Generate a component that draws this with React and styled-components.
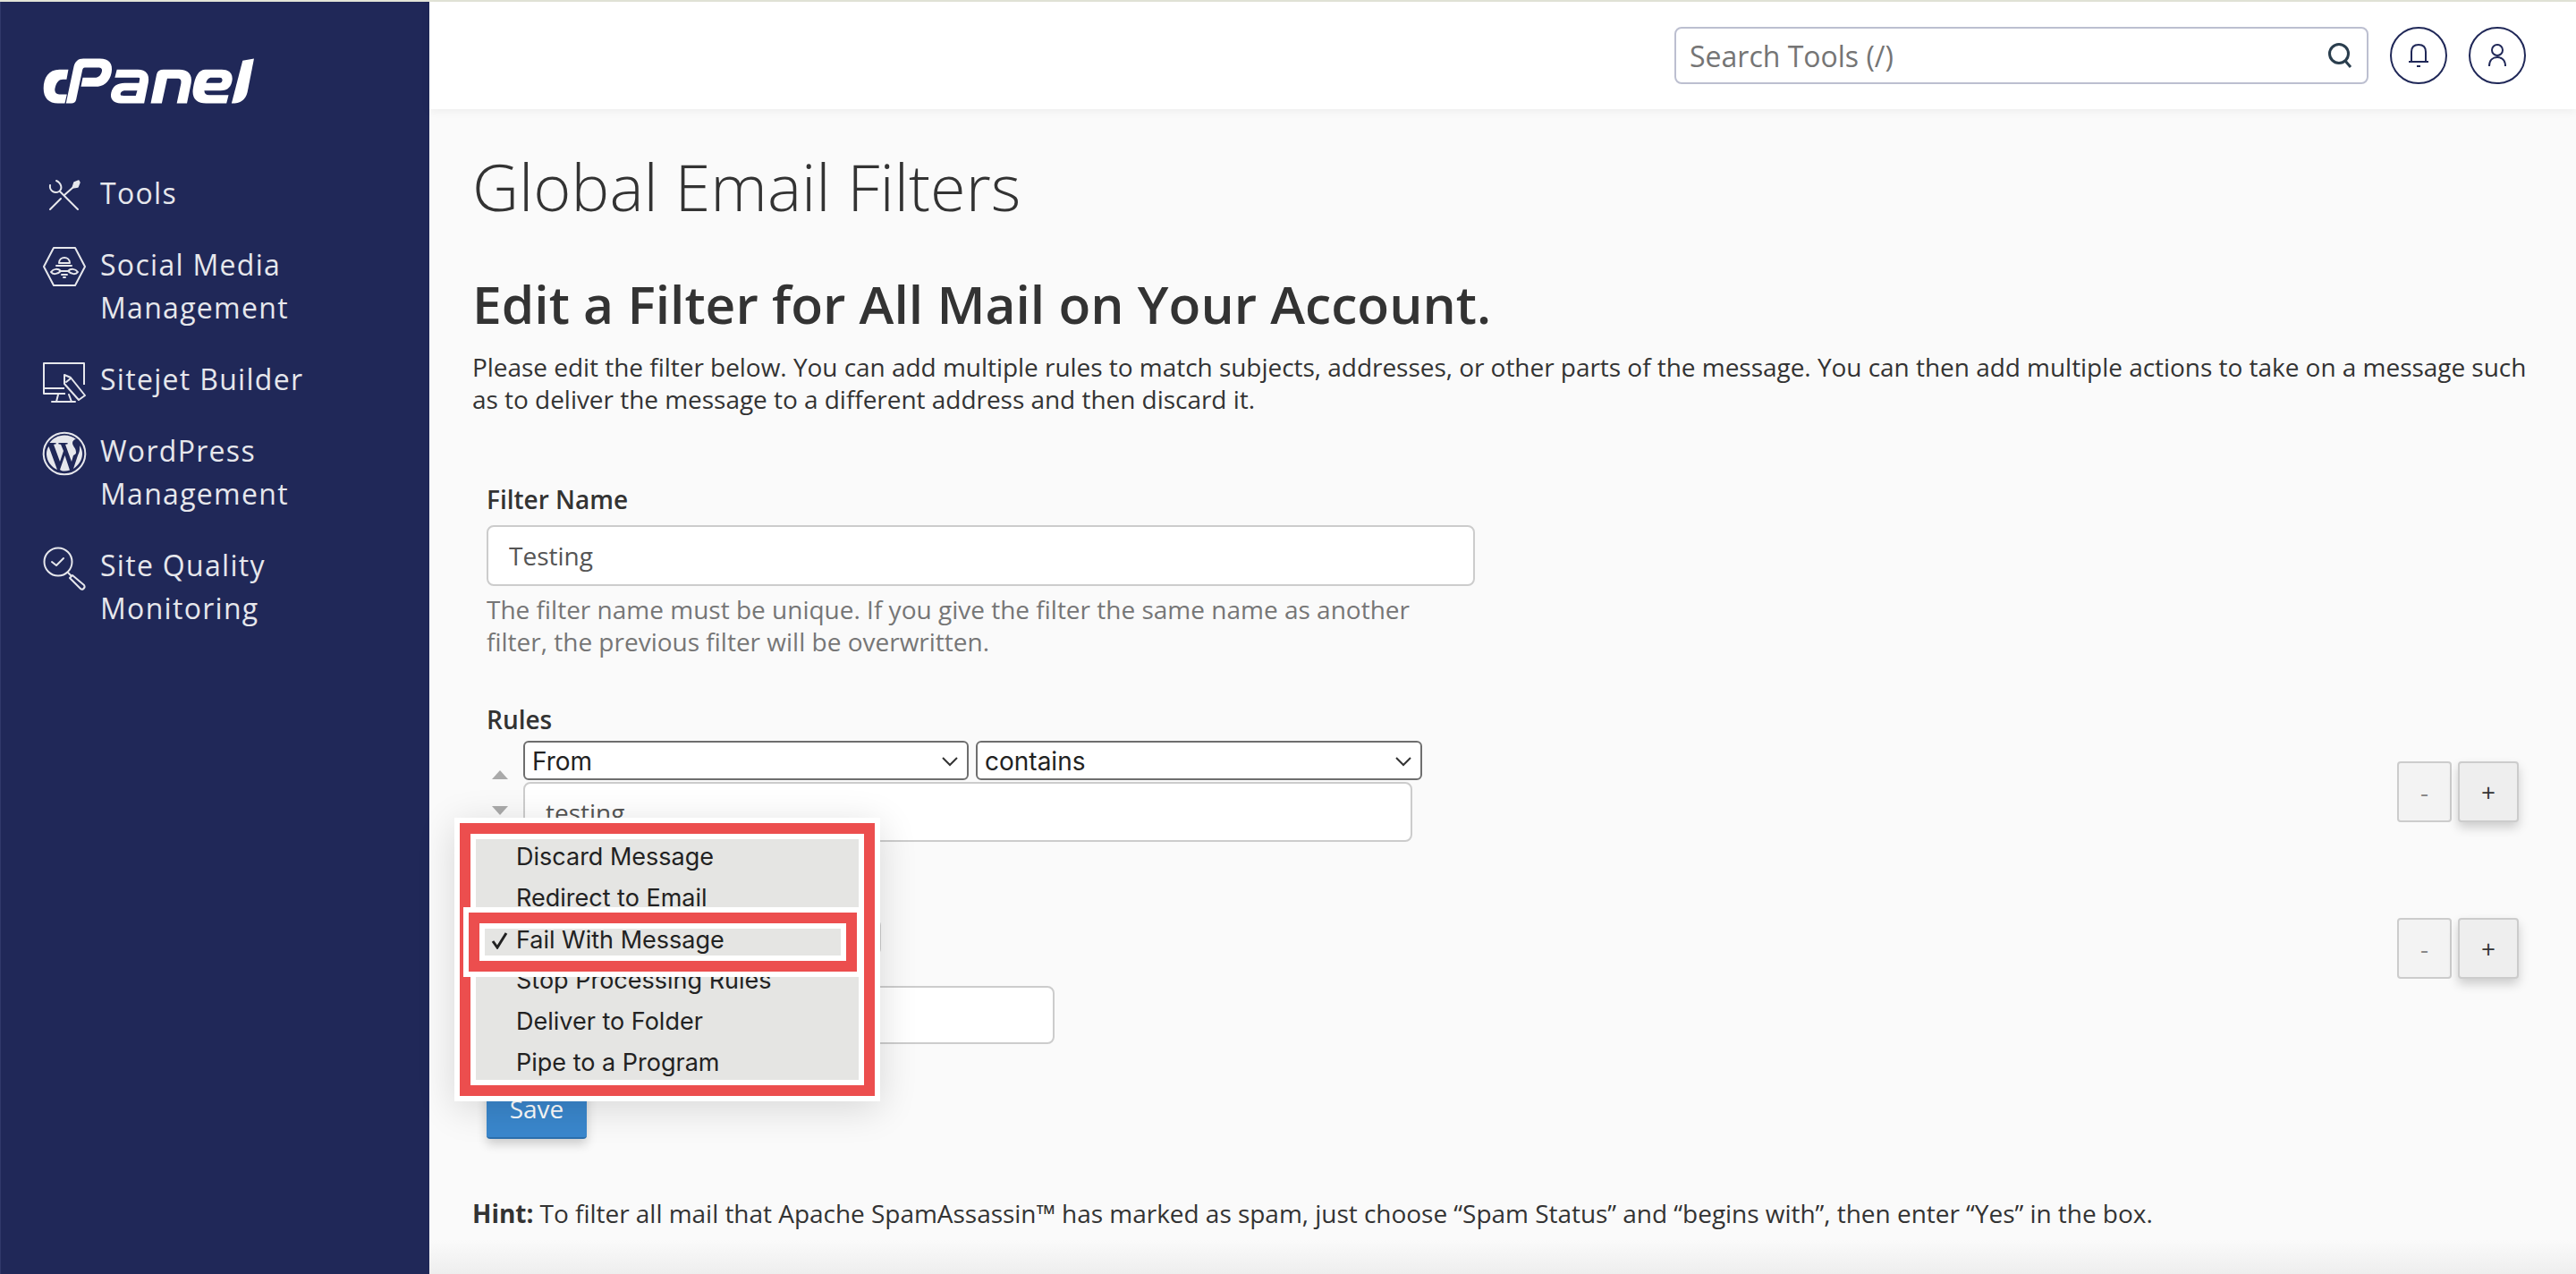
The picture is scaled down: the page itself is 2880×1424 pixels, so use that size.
import React from 'react'
import styled, { createGlobalStyle } from 'styled-components'

const GlobalStyle = createGlobalStyle`
  html, body {
    margin: 0;
    padding: 0;
    height: 100%;
    background: #fafafa;
    font-family: "Open Sans", "Liberation Sans", sans-serif;
    overflow: hidden;
  }
  * { box-sizing: border-box; }
`

const Page = styled.div`
  width: 2880px;
  height: 1424px;
  display: flex;
  flex-direction: column;
  overflow: hidden;
`

const TopStrip = styled.div`
  height: 2px;
  flex: none;
  background: #e3e5d8;
`

const Shell = styled.div`
  flex: 1;
  display: flex;
  min-height: 0;
`

const Sidebar = styled.nav`
  width: 480px;
  flex: none;
  background: #202858;
  border-left: 1px solid #31396a;
  padding: 63px 0 0 47px;
`

const Logo = styled.svg`
  display: block;
  width: 236px;
  height: 51px;
  margin-bottom: 76px;
`

const NavList = styled.div`
  display: flex;
  flex-direction: column;
  gap: 32px;
`

const NavItem = styled.a`
  display: flex;
  gap: 16px;
  color: #e6e7ec;
  font-size: 32px;
  line-height: 48px;
  letter-spacing: 1.3px;
`

const NavLabel = styled.span`
  width: 270px;
`

const NavIcon = styled.svg`
  width: 48px;
  height: 48px;
  flex: none;
  overflow: visible;
  margin-top: ${(p) => p.$shift || 0}px;
  fill: none;
  stroke: #e6e7ec;
  stroke-width: 2;
  stroke-linecap: round;
  stroke-linejoin: round;
`

const Main = styled.main`
  flex: 1;
  min-width: 0;
  position: relative;
  display: flex;
  flex-direction: column;

  &::after {
    content: '';
    position: absolute;
    left: 0;
    right: 0;
    bottom: 0;
    height: 38px;
    background: linear-gradient(to bottom, rgba(238, 238, 238, 0), #eeeeee);
  }
`

const Topbar = styled.header`
  height: 120px;
  flex: none;
  background: #fff;
  box-shadow: 0 2px 10px rgba(0, 0, 0, 0.06);
  display: flex;
  justify-content: flex-end;
  align-items: flex-start;
  gap: 24px;
  padding: 28px 56px 0 0;
`

const SearchBox = styled.label`
  width: 776px;
  height: 64px;
  display: flex;
  align-items: center;
  justify-content: space-between;
  padding: 0 14px 0 15px;
  border: 2px solid #bcbfd0;
  border-radius: 8px;
  background: #fff;
`

const SearchInput = styled.input`
  flex: 1;
  border: 0;
  outline: 0;
  padding: 0;
  background: none;
  font-family: inherit;
  font-size: 32px;
  color: #333;

  &::placeholder {
    color: #757575;
    opacity: 1;
  }
`

const RoundButton = styled.button`
  width: 64px;
  height: 64px;
  padding: 0;
  border: 2px solid #202858;
  border-radius: 50%;
  background: #fff;
  display: flex;
  align-items: center;
  justify-content: center;
`

const Content = styled.div`
  padding: 46px 48px 0;
  color: #333;
  font-size: 28px;
  line-height: 36px;
`

const Title = styled.h1`
  margin: 0;
  font-size: 72px;
  line-height: 80px;
  font-weight: 300;
  color: #333;
`

const Heading = styled.h2`
  margin: 58px 0 0;
  font-size: 58.7px;
  line-height: 66px;
  font-weight: 600;
  color: #333;
`

const Intro = styled.p`
  margin: 20px 0 0;
  letter-spacing: -0.035px;
`

const Form = styled.form`
  margin-top: 76px;
  padding-left: 16px;
`

const FieldLabel = styled.div`
  font-weight: 600;
  margin-top: ${(p) => p.$top || 0}px;
  margin-bottom: ${(p) => p.$gap || 6}px;
`

const TextInput = styled.input`
  display: block;
  width: ${(p) => p.$width}px;
  height: ${(p) => p.$height}px;
  padding: 0 23px;
  border: 2px solid #ccc;
  border-radius: 8px;
  background: #fff;
  outline: 0;
  font-family: inherit;
  font-size: 28px;
  color: #555;
`

const HelpText = styled.p`
  width: 1105px;
  margin: 8px 0 51px;
  color: #767676;
`

const RuleRow = styled.div`
  position: relative;
  display: flex;
  align-items: ${(p) => p.$align || 'center'};
  justify-content: space-between;
  padding-right: 16px;
`

const RuleBody = styled.div`
  display: flex;
  align-items: center;
`

const SortArrows = styled.div`
  width: 41px;
  flex: none;
  display: flex;
  flex-direction: column;
  gap: 30px;
  padding: 33px 0 0 6px;
  align-self: flex-start;
`

const Arrow = styled.span`
  display: block;
  width: 0;
  height: 0;
  border-left: 9px solid transparent;
  border-right: 9px solid transparent;
  ${(p) => (p.$down ? 'border-top: 10px solid #aaa;' : 'border-bottom: 10px solid #aaa;')}
`

const RuleFields = styled.div`
  display: flex;
  flex-direction: column;
  gap: ${(p) => p.$gap || 2}px;
  padding-top: ${(p) => p.$top || 0}px;
`

const SelectRow = styled.div`
  display: flex;
  gap: 8px;
`

const SelectBox = styled.div`
  width: ${(p) => p.$width}px;
  height: ${(p) => p.$height || 44}px;
  display: flex;
  align-items: center;
  justify-content: space-between;
  padding: 2px 10px 0 8px;
  border: 2px solid ${(p) => p.$border || '#6e6e6e'};
  border-radius: 6px;
  background: #fff;
  font-family: Inter, "Liberation Sans", sans-serif;
  font-size: 28px;
  color: #222;
`

const Chevron = styled.svg`
  width: 18px;
  height: 12px;
  fill: none;
  stroke: #333;
  stroke-width: 2;
`

const StepButtons = styled.div`
  display: flex;
  gap: 7px;
`

const MinusButton = styled.button`
  width: 61px;
  height: 68px;
  padding: 0;
  border: 2px solid #ccc;
  border-radius: 4px;
  background: #f3f3f3;
  color: #888;
  font-family: inherit;
  font-size: 28px;
`

const PlusButton = styled(MinusButton)`
  width: 68px;
  background: #eeeeee;
  color: #333;
  box-shadow: 0 6px 12px rgba(0, 0, 0, 0.18);
`

const SaveButton = styled.button`
  display: block;
  width: 112px;
  height: 66px;
  margin-top: 40px;
  border: 0;
  border-bottom: 2px solid #2c6fad;
  border-radius: 4px;
  background: #3a87cd;
  color: #fff;
  font-family: inherit;
  font-size: 28px;
  box-shadow: 0 6px 12px rgba(0, 0, 0, 0.18);
`

const Hint = styled.p`
  margin: 65px 0 0 -16px;
  letter-spacing: -0.03px;
`

const HintLead = styled.strong`
  font-weight: 700;
`

const Popup = styled.div`
  position: absolute;
  z-index: 2;
  top: -112px;
  left: -36px;
  width: 476px;
  height: 317px;
  padding: 6px;
  background: #fff;
  box-shadow: 0 8px 40px rgba(0, 0, 0, 0.14);
  font-family: Inter, "Liberation Sans", sans-serif;
  font-size: 27px;
  color: #222;
`

const RedFrame = styled.div`
  height: 100%;
  border: 12px solid #ec4e4e;
`

const MenuList = styled.div`
  height: 100%;
  border: 6px solid #fff;
  background: #e5e5e3;
  overflow: hidden;
`

const MenuRow = styled.div`
  height: 46px;
  line-height: 46px;
  padding-left: 45px;

  &:first-child {
    margin-top: -3px;
  }
`

const Highlight = styled.div`
  position: absolute;
  top: 100px;
  left: 10px;
  width: 446px;
  height: 78px;
  padding: 6px;
  background: #fff;
`

const HighlightFrame = styled.div`
  height: 100%;
  border: 12px solid #ec4e4e;
  background: #fff;
  padding: 6px;
`

const CheckedRow = styled.div`
  height: 30px;
  line-height: 26px;
  display: flex;
  align-items: flex-start;
  background: #e5e5e3;
  padding-left: 7px;
  gap: 9px;
`

const CheckIcon = styled.svg`
  width: 19px;
  height: 20px;
  margin-top: 3px;
  flex: none;
  fill: none;
  stroke: #222;
  stroke-width: 3;
`

const menuItems = [
  'Discard Message',
  'Redirect to Email',
  'Fail With Message',
  'Stop Processing Rules',
  'Deliver to Folder',
  'Pipe to a Program',
]

const CpanelLogo = () => (
  <Logo viewBox="145 198 705 150" fill="#fff" fillRule="evenodd">
    <path d="M230 235H200C165 235 147 262 147 298C147 330 165 348 195 348H218L225 318H200C188 318 182 308 186 295C190 278 198 268 212 268H224Z" />
    <path d="M222 348L248 225C252 208 262 198 280 198H335C365 198 380 215 374 245C368 278 345 292 320 292H272L278 262H318C332 262 340 252 342 240C344 232 338 228 330 228H285C280 228 278 232 277 236L256 335C254 344 248 348 240 348Z" />
    <path d="M392 235H462C490 235 502 252 497 278L483 348H405C380 348 368 332 373 312C378 290 395 280 418 280H466L468 268C470 262 466 262 460 262H385ZM420 305C408 305 404 312 404 318C404 322 408 322 414 322H455L460 305Z" />
    <path d="M505 348L525 250C528 240 535 235 548 235H600C630 235 645 252 640 280L626 348H592L606 282C608 270 604 265 594 265H560L542 348Z" />
    <path d="M688 235H742C770 235 782 252 776 276C772 296 758 305 738 305H684C684 315 690 320 700 320H765L758 348H690C658 348 640 330 647 295C653 258 665 235 688 235ZM690 280H735C746 280 748 262 736 262H708C698 262 692 270 690 280Z" />
    <path d="M812 205L850 198L828 310C822 335 805 348 775 348Z" />
  </Logo>
)

const ToolsIcon = () => (
  <NavIcon viewBox="0 0 48 48" strokeWidth="3">
    <path d="M19 22L39 42M8 42L20 30M24 26L33 18" />
    <path d="M8 15C7 21 13 25 18 22C22 19 21 13 15 10" />
    <path d="M33 18L35 12L40 10L41 12L39 17Z" fill="#e6e7ec" strokeWidth="1.500" />
  </NavIcon>
)

const SocialIcon = () => (
  <NavIcon viewBox="0 0 48 48" strokeWidth="1.400" $shift={2}>
    <path d="M12 3H36L47 24L36 45H12L1 24Z" />
    <path d="M18 20C18 12 30 12 30 20ZM15 23H32M9 30C12 26 17 26 20 29C16 33 11 33 9 30ZM39 30C36 26 31 26 28 29C32 33 37 33 39 30ZM20 29H27M21 33H27M23 36H25" />
  </NavIcon>
)

const SitejetIcon = () => (
  <NavIcon viewBox="0 0 48 48" strokeWidth="1.800">
    <path d="M46 30V6H1V40H25M1 34H24" strokeLinecap="butt" />
    <path d="M17 41L15 49M29 41L32 49M10 49H36" />
    <path d="M24 19L31 22L47 42L40 47L24 29ZM26 27L31 23" />
  </NavIcon>
)

const WordpressIcon = () => (
  <NavIcon viewBox="0 0 48 48" strokeWidth="1" $shift={3}>
    <circle cx="24" cy="24" r="23.3" />
    <path fill="#e6e7ec" stroke="none" d="M4 24C4 32 9 39 16 42L6.500 16C5 18 4 21 4 24ZM37 23C37 20 36 18 35 17C34 15 33 14 33 12C33 10 35 8 37 8L37 8C33.500 5 29 3.500 24 3.500C17 3.500 11 7 7.500 12H9C11 12 14 12 14 12C15 12 15 13.500 14 13.500C14 13.500 13 13.600 12 13.700L19 33L23 21L20 13.700C19 13.600 18 13.500 18 13.500C17 13.400 17 12 18 12C18 12 21 12 23 12C25 12 27 12 27 12C28 12 28 13.500 27 13.500C27 13.500 26 13.600 25 13.700L32 33L34 26C36 25 37 24 37 23ZM24.500 26L19 42C20.500 43 22 43.500 24 43.500C26 43.500 28 43 30 42.500ZM41 15C41 16 41 17 41 18C41 20 41 22 39 26L34 41C40 37 44 31 44 24C44 21 43 18 41 15Z" />
  </NavIcon>
)

const QualityIcon = () => (
  <NavIcon viewBox="0 0 48 48" strokeWidth="2" $shift={3}>
    <circle cx="17" cy="17" r="15.500" />
    <path d="M10 17L15 21L23 13" />
    <path d="M28 29L32 33M33 32L46 43C48 46 44 49 42 47L30 35Z" />
  </NavIcon>
)

const navItems = [
  { icon: <ToolsIcon />, label: 'Tools' },
  { icon: <SocialIcon />, label: 'Social Media Management' },
  { icon: <SitejetIcon />, label: 'Sitejet Builder' },
  { icon: <WordpressIcon />, label: 'WordPress Management' },
  { icon: <QualityIcon />, label: 'Site Quality Monitoring' },
]

const Down = () => (
  <Chevron viewBox="0 0 18 12">
    <path d="M1 2L9 10L17 2" />
  </Chevron>
)

const App = () => (
  <Page>
    <GlobalStyle />
    <TopStrip />
    <Shell>
      <Sidebar>
        <CpanelLogo />
        <NavList>
          {navItems.map((item) => (
            <NavItem key={item.label}>
              {item.icon}
              <NavLabel>{item.label}</NavLabel>
            </NavItem>
          ))}
        </NavList>
      </Sidebar>
      <Main>
        <Topbar>
          <SearchBox>
            <SearchInput placeholder="Search Tools (/)" />
            <svg width="32" height="32" viewBox="0 0 32 32" fill="none" stroke="#2a3e4e" strokeWidth="3">
              <circle cx="15" cy="14" r="10.500" />
              <path d="M22 22L28 29" />
            </svg>
          </SearchBox>
          <RoundButton aria-label="Notifications">
            <svg width="24" height="28" viewBox="0 0 24 28" fill="none" stroke="#202858" strokeWidth="2">
              <path d="M4 21V10C4 5 7 2 12 2C17 2 20 5 20 10V21M1 21H23M10 26H14" />
            </svg>
          </RoundButton>
          <RoundButton aria-label="Account">
            <svg width="24" height="28" viewBox="0 0 24 28" fill="none" stroke="#202858" strokeWidth="2">
              <circle cx="12" cy="8" r="6" />
              <path d="M3 26C3 19 7 16 12 16C17 16 21 19 21 26" />
            </svg>
          </RoundButton>
        </Topbar>
        <Content>
          <Title>Global Email Filters</Title>
          <Heading>Edit a Filter for All Mail on Your Account.</Heading>
          <Intro>
            Please edit the filter below. You can add multiple rules to match subjects, addresses, or other parts of the message. You can then add multiple actions to take on a message such as to deliver the message to a different address and then discard it.
          </Intro>
          <Form>
            <FieldLabel $gap={11}>Filter Name</FieldLabel>
            <TextInput $width={1105} $height={68} defaultValue="Testing" />
            <HelpText>
              The filter name must be unique. If you give the filter the same name as another filter, the previous filter will be overwritten.
            </HelpText>
            <FieldLabel>Rules</FieldLabel>
            <RuleRow>
              <RuleBody>
                <SortArrows>
                  <Arrow />
                  <Arrow $down />
                </SortArrows>
                <RuleFields>
                  <SelectRow>
                    <SelectBox $width={498}>From<Down /></SelectBox>
                    <SelectBox $width={499}>contains<Down /></SelectBox>
                  </SelectRow>
                  <TextInput $width={994} $height={67} defaultValue="testing" />
                </RuleFields>
              </RuleBody>
              <StepButtons>
                <MinusButton>-</MinusButton>
                <PlusButton>+</PlusButton>
              </StepButtons>
            </RuleRow>
            <FieldLabel $top={43} $gap={0}>Actions</FieldLabel>
            <RuleRow $align="flex-start">
              <RuleBody>
                <SortArrows />
                <RuleFields $gap={35} $top={2}>
                  <SelectBox $width={400} $height={39} $border="#ccc" />
                  <TextInput $width={594} $height={65} />
                </RuleFields>
              </RuleBody>
              <StepButtons>
                <MinusButton>-</MinusButton>
                <PlusButton>+</PlusButton>
              </StepButtons>
              <Popup>
                <RedFrame>
                  <MenuList>
                    {menuItems.map((item) => (
                      <MenuRow key={item}>{item}</MenuRow>
                    ))}
                  </MenuList>
                </RedFrame>
                <Highlight>
                  <HighlightFrame>
                    <CheckedRow>
                      <CheckIcon viewBox="0 0 19 20">
                        <path d="M2 11L7 18L17 2" />
                      </CheckIcon>
                      Fail With Message
                    </CheckedRow>
                  </HighlightFrame>
                </Highlight>
              </Popup>
            </RuleRow>
            <SaveButton type="button">Save</SaveButton>
            <Hint>
              <HintLead>Hint:</HintLead> To filter all mail that Apache SpamAssassin™ has marked as spam, just choose “Spam Status” and “begins with”, then enter “Yes” in the box.
            </Hint>
          </Form>
        </Content>
      </Main>
    </Shell>
  </Page>
)

export default App
